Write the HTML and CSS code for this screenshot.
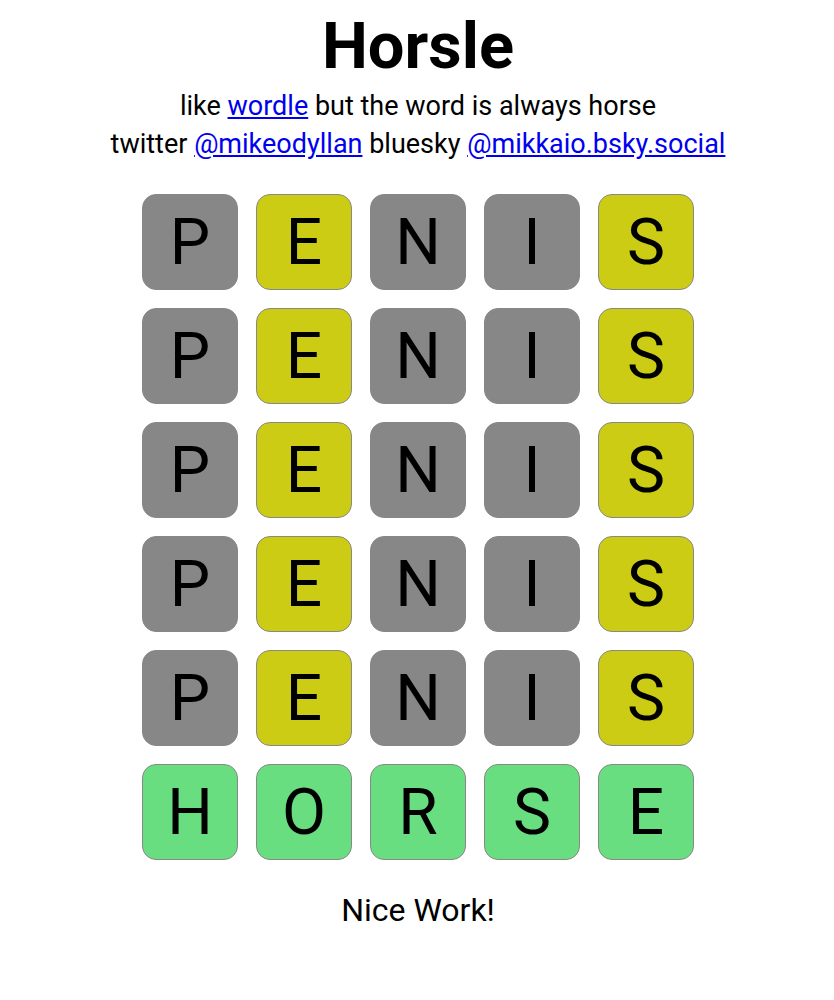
FILE: index.html
```html
<!DOCTYPE html>
<html lang="en">
<head>
<meta charset="utf-8">
<title>Horsle</title>
<link rel="stylesheet" href="styles.css">
</head>
<body>
<main class="page">
  <h1 class="title">Horsle</h1>
  <div class="subs">
    <p class="sub">like <a href="#">wordle</a> but the word is always horse</p>
    <p class="sub">twitter <a href="#">@mikeodyllan</a> bluesky <a href="#">@mikkaio.bsky.social</a></p>
  </div>
  <div class="board">
    <div class="tile gray">P</div><div class="tile yellow">E</div><div class="tile gray">N</div><div class="tile gray">I</div><div class="tile yellow">S</div>
    <div class="tile gray">P</div><div class="tile yellow">E</div><div class="tile gray">N</div><div class="tile gray">I</div><div class="tile yellow">S</div>
    <div class="tile gray">P</div><div class="tile yellow">E</div><div class="tile gray">N</div><div class="tile gray">I</div><div class="tile yellow">S</div>
    <div class="tile gray">P</div><div class="tile yellow">E</div><div class="tile gray">N</div><div class="tile gray">I</div><div class="tile yellow">S</div>
    <div class="tile gray">P</div><div class="tile yellow">E</div><div class="tile gray">N</div><div class="tile gray">I</div><div class="tile yellow">S</div>
    <div class="tile green">H</div><div class="tile green">O</div><div class="tile green">R</div><div class="tile green">S</div><div class="tile green">E</div>
  </div>
  <p class="result">Nice Work!</p>
</main>
</body>
</html>
```
FILE: styles.css
```css
html, body {
  margin: 0;
  padding: 0;
  background: #ffffff;
}
body {
  font-family: Roboto, "Liberation Sans", Arial, sans-serif;
  color: #000;
}
.page {
  display: flex;
  flex-direction: column;
  align-items: center;
  padding: 8px 0 0 2px;
}
.title {
  margin: 0;
  font-size: 65px;
  line-height: 76px;
  font-weight: 700;
}
.subs {
  margin-top: 3px;
  text-align: center;
}
.sub {
  margin: 0;
  font-size: 27px;
  line-height: 38px;
}
.sub a {
  color: #0000ee;
  text-decoration: underline;
}
.board {
  margin-top: 31px;
  display: grid;
  grid-template-columns: repeat(5, 96px);
  grid-auto-rows: 96px;
  gap: 18px;
}
.tile {
  box-sizing: border-box;
  border-radius: 14px;
  border: 1.5px solid #888888;
  display: flex;
  align-items: center;
  justify-content: center;
  font-size: 64px;
  font-weight: 400;
}
.gray {
  background: #878787;
  border-color: #878787;
}
.yellow {
  background: #cccc14;
}
.green {
  background: #69de80;
}
.result {
  margin: 30px 0 0;
  font-size: 32px;
  line-height: 40px;
}
```
